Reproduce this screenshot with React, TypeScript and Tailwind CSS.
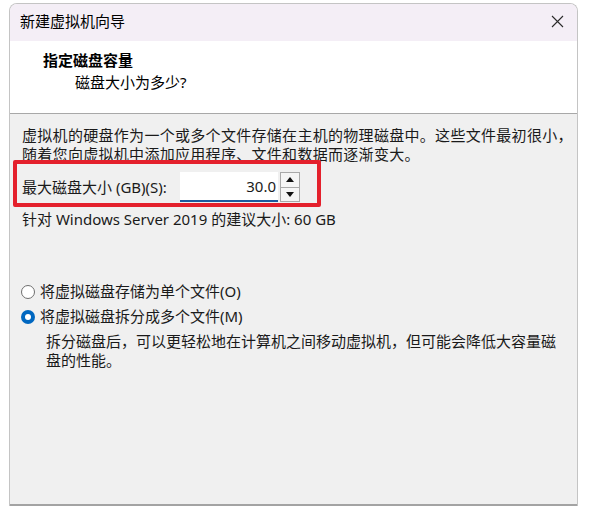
import React from "react";

const font = { fontFamily: '"Noto Sans", "Noto Sans CJK SC", sans-serif' } as React.CSSProperties;

function Radio({ checked }: { checked?: boolean }) {
  if (checked) {
    return (
      <span className="w-[14px] h-[14px] rounded-full bg-[#0067c0] flex items-center justify-center shrink-0">
        <span className="w-[6px] h-[6px] rounded-full bg-white" />
      </span>
    );
  }
  return <span className="w-[14px] h-[14px] rounded-full border border-[#6f6f6f] bg-white shrink-0" />;
}

export default function App() {
  return (
    <div className="w-[605px] h-[508px] bg-white pt-[3px] text-[#1a1a1a]" style={font}>
      <div className="ml-[9px] w-[569px] h-[503px] border-x border-t border-[#c4c4c4] rounded-t-[8px] overflow-hidden flex flex-col">
        {/* Title bar */}
        <div className="h-[37px] bg-[#f4eef6] flex items-center justify-between pl-[10px] pr-[13px] pb-[3px] shrink-0">
          <span className="text-[15px] leading-[19px] text-black">新建虚拟机向导</span>
          <svg width="13" height="13" viewBox="0 0 13 13" className="shrink-0">
            <path d="M1 1 L12 12 M12 1 L1 12" stroke="#2b2b2b" strokeWidth="1.1" fill="none" />
          </svg>
        </div>
        {/* Header */}
        <div className="h-[73px] bg-white border-b border-[#a8a8a8] shrink-0 pt-[10px]">
          <div className="pl-[33px] text-[15px] leading-[19px] font-bold text-black">指定磁盘容量</div>
          <div className="pl-[65px] mt-[3px] text-[15px] leading-[19px] text-black">磁盘大小为多少?</div>
        </div>
        {/* Body */}
        <div className="relative flex-1 bg-[#f0f0f0] border-b-2 border-[#a3a3a3] pl-[12px] pt-[12px] text-[15px] leading-[19px]">
          <div className="tracking-[0.3px]">
            <p>虚拟机的硬盘作为一个或多个文件存储在主机的物理磁盘中。这些文件最初很小，</p>
            <p>随着您向虚拟机中添加应用程序、文件和数据而逐渐变大。</p>
          </div>

          <div className="mt-[8px] h-[30px] flex items-center">
            <span className="w-[158px] shrink-0">最大磁盘大小 (GB)(S):</span>
            <div className="w-[98px] h-[30px] bg-white border-b-2 border-[#1d5a9e] flex items-center justify-end pr-[2px]">
              <span>30.0</span>
            </div>
            <div className="ml-[2px] w-[20px] h-[30px] border border-[#a9a9a9] bg-[#f5f5f5] flex flex-col">
              <div className="flex-1 flex items-center justify-center border-b border-[#a9a9a9]">
                <svg width="8" height="5" viewBox="0 0 8 5"><path d="M0 5 L4 0 L8 5 Z" fill="#111" /></svg>
              </div>
              <div className="flex-1 flex items-center justify-center">
                <svg width="8" height="5" viewBox="0 0 8 5"><path d="M0 0 L8 0 L4 5 Z" fill="#111" /></svg>
              </div>
            </div>
          </div>

          <p className="mt-[8px]">针对 Windows Server 2019 的建议大小: 60 GB</p>

          <div className="mt-[53px] flex items-center gap-[5px] -ml-[1px]">
            <Radio />
            <span>将虚拟磁盘存储为单个文件(O)</span>
          </div>
          <div className="mt-[6px] flex items-center gap-[5px] -ml-[1px]">
            <Radio checked />
            <span>将虚拟磁盘拆分成多个文件(M)</span>
          </div>
          <div className="mt-[6px] pl-[24px] leading-[19px]">
            <p>拆分磁盘后，可以更轻松地在计算机之间移动虚拟机，但可能会降低大容量磁</p>
            <p>盘的性能。</p>
          </div>

          {/* Red annotation box */}
          <div className="absolute left-[3px] top-[46px] w-[308px] h-[47px] border-[4px] border-[#e4202c] rounded-[2px]" />
        </div>
      </div>
    </div>
  );
}
